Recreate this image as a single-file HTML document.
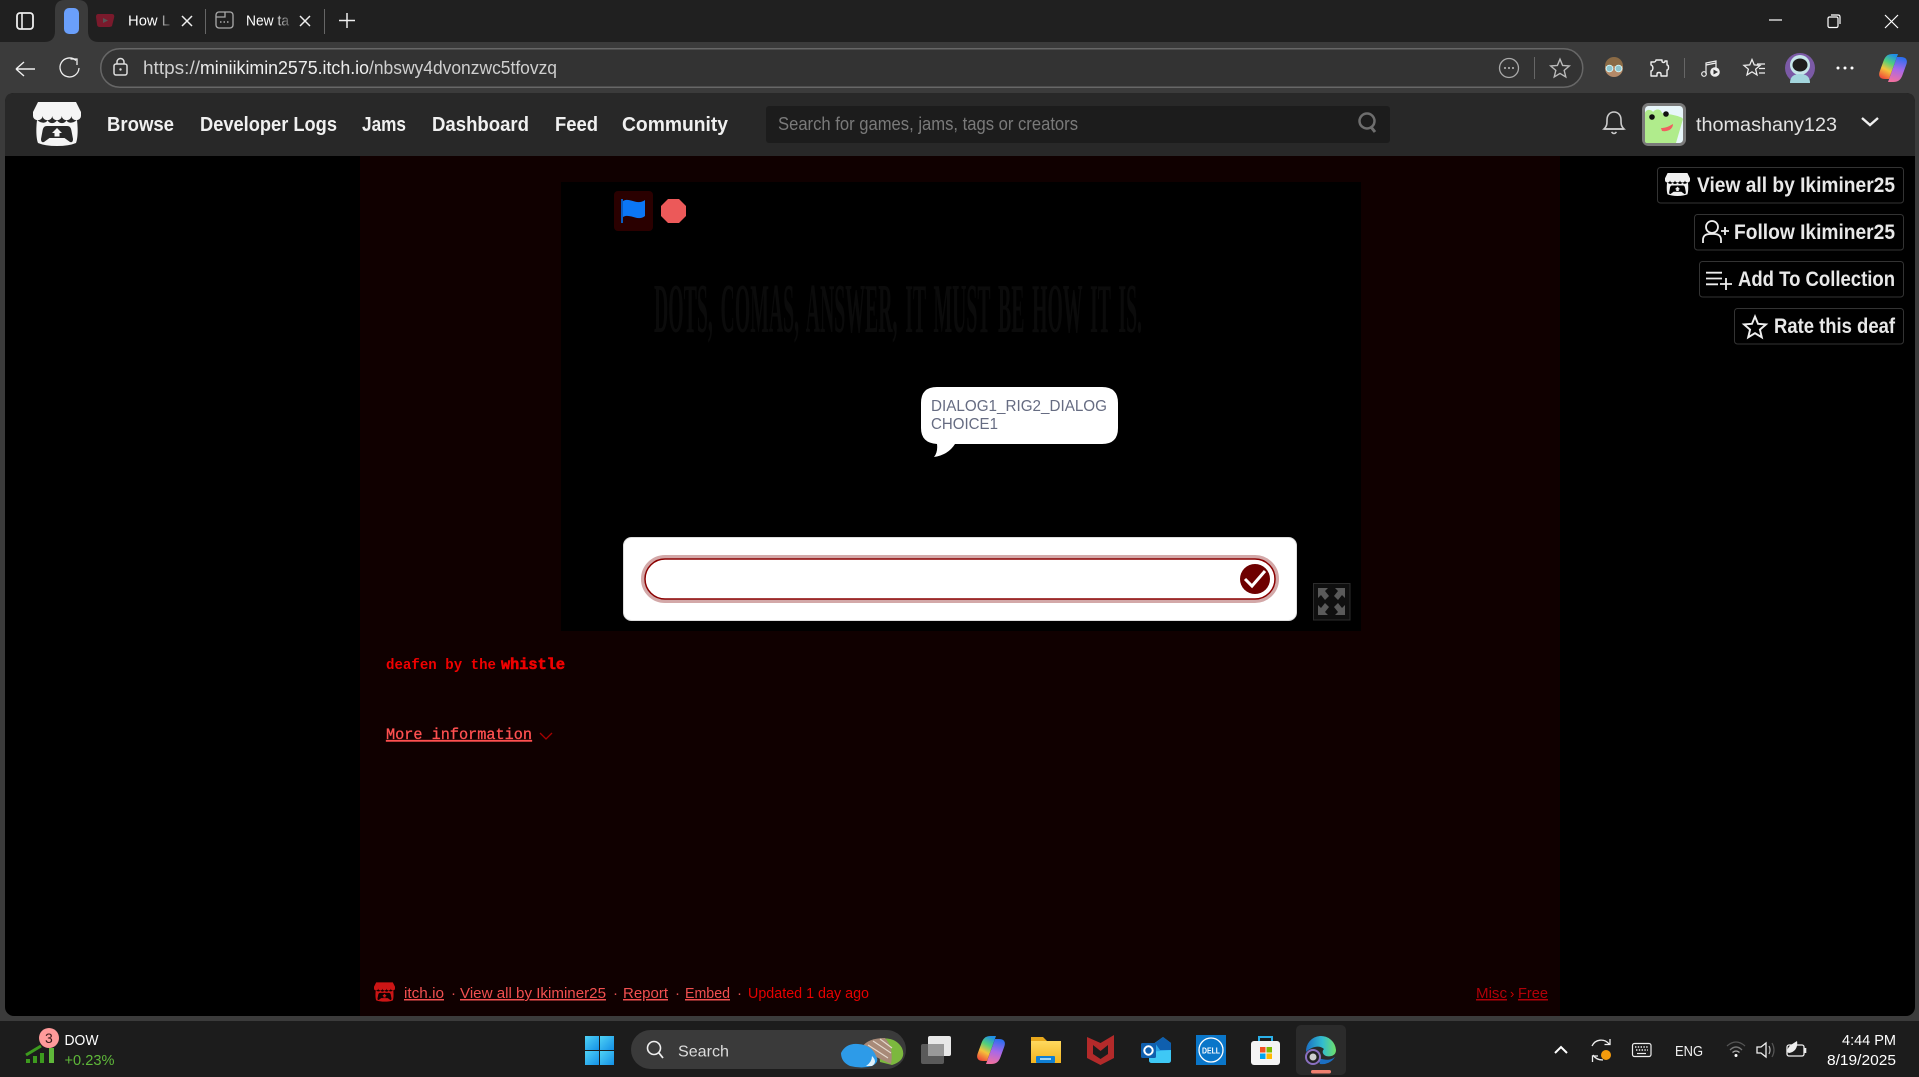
<!DOCTYPE html>
<html lang="en"><head><meta charset="utf-8"><title>How L</title>
<style>
html,body{margin:0;padding:0;width:1919px;height:1077px;overflow:hidden;background:#1c1c1c}
svg{display:block;position:absolute;left:0;top:0}
text{font-family:"Liberation Sans",sans-serif;white-space:pre}
.n{font-weight:700;font-size:20.5px;fill:#f0f0f0}
.b{font-weight:700;font-size:21px;fill:#e8e8e8}
.f{font-size:15px;fill:#f25050;text-decoration:underline}
.d{font-size:15px;fill:#e05050}
text.m{font-family:"Liberation Mono",monospace}
.t{fill:#fff;font-size:14.5px}
</style></head><body>
<svg width="1919" height="1077" viewBox="0 0 1919 1077" xmlns="http://www.w3.org/2000/svg">
<defs>
<linearGradient id="fa" x1="0" x2="1" y1="0" y2="0"><stop offset=".65" stop-color="#fff"/><stop offset="1" stop-color="#555"/></linearGradient>
<linearGradient id="co" x1=".7" x2=".3" y1="0" y2="1"><stop offset="0" stop-color="#1f8fe8"/><stop offset=".35" stop-color="#52d07a"/><stop offset=".65" stop-color="#f5c33b"/><stop offset="1" stop-color="#f0503a"/></linearGradient>
<linearGradient id="co2" x1=".6" x2=".4" y1="0" y2="1"><stop offset="0" stop-color="#2a6ff0"/><stop offset=".5" stop-color="#a868e8"/><stop offset="1" stop-color="#f070a0"/></linearGradient>
<linearGradient id="win" x1="0" x2="1" y1="0" y2="1"><stop offset="0" stop-color="#4fd2f5"/><stop offset="1" stop-color="#1490e6"/></linearGradient>
<linearGradient id="ed" x1="0" x2="1" y1=".5" y2=".5"><stop offset="0" stop-color="#1b6fc4"/><stop offset=".55" stop-color="#32bcd0"/><stop offset="1" stop-color="#6fe06a"/></linearGradient>
<linearGradient id="fo" x1="0" x2="0" y1="0" y2="1"><stop offset="0" stop-color="#ffd95e"/><stop offset="1" stop-color="#f3b41f"/></linearGradient>
<symbol id="itch" viewBox="0 0 48 44">
<path d="M5 0H43L48 10V14A4.8 4.2 0 0 1 38.4 14A4.8 4.2 0 0 1 28.8 14A4.8 4.2 0 0 1 19.2 14A4.8 4.2 0 0 1 9.6 14A4.8 4.2 0 0 1 0 14V10Z" fill="currentColor"/>
<path fill-rule="evenodd" fill="currentColor" d="M4 18C9 22 13 21 14.500 18.500C17 22 21 22 24 18.500C27 22 31 22 33.500 18.500C35 21 39 22 44 18C45 26 45 36 43 41Q36 44 24 44Q12 44 5 41C3 36 3 26 4 18ZM14 24C11 24 10 26 9.500 29L8 37Q8 41 11 40L16.500 36H31.500L37 40Q40 41 40 37L38.500 29C38 26 37 24 34 24Z"/>
<path d="M24 26L29 31H26.500V34.500H21.500V31H19Z" fill="currentColor"/>
</symbol>
<path id="star" d="M0 -10L2.65 -3.64L9.5 -3.1L4.28 1.39L5.9 8.1L0 4.5L-5.9 8.1L-4.28 1.39L-9.5 -3.1L-2.65 -3.64Z"/>
<path id="copA" d="M0 -14C-6 -14 -8 -11 -9.500 -7L-13.500 4C-15 9 -12 11 -8 11H-4L5 -14Z"/>
<path id="copB" d="M0 14C6 14 8 11 9.500 7L13.500 -4C15 -9 12 -11 8 -11H4L-5 14Z"/>
</defs>

<!-- browser chrome -->
<rect width="1919" height="1077" fill="#3b3b3b"/>
<rect width="1919" height="42" fill="#202020"/>
<path d="M44 42Q55 42 55 31V10Q55 0 65 0H78Q88 0 88 10V31Q88 42 99 42Z" fill="#3b3b3b"/>
<rect x="17" y="13" width="16" height="16" rx="3" fill="none" stroke="#eee" stroke-width="1.800"/><path d="M22 13V29" stroke="#eee" stroke-width="1.600" fill="none"/>
<rect x="64" y="8" width="15" height="26" rx="5" fill="#6a9ffb"/>
<path d="M98 14H112Q115 14 114 18L112 26Q111 27 108 27H100Q97 27 97 24L96 17Q96 14 98 14Z" fill="#7a1a2c"/><path d="M103 18L108 20.500L103 23Z" fill="#555"/>
<text x="128" y="25.500" font-size="15" fill="url(#fa)" textLength="42" lengthAdjust="spacingAndGlyphs">How L</text>
<path d="M182 16L192 26M192 16L182 26" stroke="#eee" stroke-width="1.500"/>
<rect x="205" y="9" width="1" height="25" fill="#666"/>
<rect x="216" y="12" width="17" height="16" rx="3" fill="none" stroke="#aaa" stroke-width="1.300"/><path d="M216 17H225V12" fill="none" stroke="#aaa" stroke-width="1.300"/><path d="M220 22H229" stroke="#aaa" stroke-width="1.500" stroke-dasharray="1.500 2"/>
<text x="246" y="25.500" font-size="15" fill="url(#fa)" textLength="43" lengthAdjust="spacingAndGlyphs">New ta</text>
<path d="M300 16L310 26M310 16L300 26" stroke="#eee" stroke-width="1.500"/>
<rect x="324" y="9" width="1" height="25" fill="#666"/>
<path d="M347 13V28M339 20.500H355" stroke="#eee" stroke-width="1.500"/>
<path d="M1769 20H1782" stroke="#fff" stroke-width="1.200"/>
<rect x="1828" y="17" width="10" height="10.500" rx="1.500" fill="none" stroke="#fff" stroke-width="1.200"/><path d="M1831 15H1838Q1840 15 1840 17V24" fill="none" stroke="#fff" stroke-width="1.200"/>
<path d="M1885 15L1898 28M1898 15L1885 28" stroke="#fff" stroke-width="1.200"/>

<path d="M16 69H35M16 69L24 62M16 69L24 76" stroke="#f0f0f0" stroke-width="1.400" fill="none"/>
<path d="M76 60.500A9.500 9.500 0 1 0 79 68" stroke="#eee" stroke-width="1.300" fill="none"/><path d="M70.500 59H77V65" stroke="#eee" stroke-width="1.300" fill="none"/>
<rect x="100.750" y="48.750" width="1482" height="38.500" rx="19" fill="#333" stroke="#676767" stroke-width="1.500"/>
<rect x="114" y="64" width="13" height="11" rx="2" fill="none" stroke="#ddd" stroke-width="1.500"/><path d="M117 64V62A3.500 3.500 0 0 1 124 62V64" fill="none" stroke="#ddd" stroke-width="1.500"/><circle cx="120.500" cy="69.500" r="1.200" fill="#ddd"/>
<text x="143" y="74" font-size="18" fill="#cfcfcf" textLength="57" lengthAdjust="spacingAndGlyphs">https://</text>
<text x="200" y="74" font-size="18" fill="#eeeeee" textLength="169" lengthAdjust="spacingAndGlyphs">miniikimin2575.itch.io</text>
<text x="369" y="74" font-size="18" fill="#cfcfcf" textLength="188" lengthAdjust="spacingAndGlyphs">/nbswy4dvonzwc5tfovzq</text>
<circle cx="1509" cy="68" r="9.500" fill="none" stroke="#aaa" stroke-width="1.300"/><path d="M1504 68H1506M1508 68H1510M1512 68H1514" stroke="#aaa" stroke-width="1.800"/>
<rect x="1534" y="57" width="1" height="22" fill="#666"/>
<use href="#star" transform="translate(1560 69) scale(.98)" fill="none" stroke="#bbb" stroke-width="1.400"/>
<circle cx="1614" cy="68" r="9" fill="#b58a68"/><path d="M1605 66A9 9 0 0 1 1623 66Z" fill="#8a6a45"/><circle cx="1609.500" cy="68.500" r="3.400" fill="#8fc4cc" stroke="#dff" stroke-width=".8"/><circle cx="1618.500" cy="68.500" r="3.400" fill="#8fc4cc" stroke="#dff" stroke-width=".8"/>
<path d="M1656 60H1662V61C1662 63 1665 63 1665 61H1667V65C1669 65 1669 70 1667 70V76H1661V74C1661 72 1657 72 1657 74V76H1651V71C1653 71 1654 66 1651 65V62H1654C1655 62 1656 61 1656 60Z" fill="none" stroke="#eee" stroke-width="1.400" stroke-linejoin="round"/>
<rect x="1684" y="58" width="1" height="20" fill="#666"/>
<path d="M1706 74V63L1716 61V70" fill="none" stroke="#eee" stroke-width="1.200"/><path d="M1706 65L1716 63" stroke="#eee" stroke-width="1.200"/><circle cx="1704" cy="74" r="2.300" fill="none" stroke="#eee" stroke-width="1.200"/><circle cx="1715" cy="72" r="4.800" fill="#eee"/><path d="M1713.500 69.500L1718 72L1713.500 74.500Z" fill="#333"/>
<use href="#star" transform="translate(1752 68) scale(.85)" fill="none" stroke="#eee" stroke-width="1.500"/><path d="M1757 64H1765M1759 68.500H1765M1759 73H1765" stroke="#eee" stroke-width="1.200"/>
<circle cx="1800" cy="68" r="15" fill="#7b5aa6"/><circle cx="1800" cy="65" r="10" fill="#c6e6ea"/><ellipse cx="1800" cy="65" rx="7.500" ry="6.500" fill="#1e1e1e"/><path d="M1790 83Q1790 74 1800 74Q1810 74 1810 83Z" fill="#a4d6de"/>
<circle cx="1838" cy="68" r="1.500" fill="#fff"/><circle cx="1845" cy="68" r="1.500" fill="#fff"/><circle cx="1852" cy="68" r="1.500" fill="#fff"/>
<use href="#copA" transform="translate(1893 68)" fill="url(#co)"/><use href="#copB" transform="translate(1893 68)" fill="url(#co2)"/>

<!-- page -->
<rect x="5" y="93" width="1910" height="923" rx="9" fill="#000"/>
<path d="M5 156V102Q5 93 14 93H1906Q1915 93 1915 102V156Z" fill="#282828"/>
<rect x="360" y="156" width="1200" height="860" fill="#100000"/>
<use href="#itch" x="33" y="102" width="48" height="44" color="#f5f5f5" style="color:#f5f5f5"/>
<text class="n" x="107" y="131" textLength="67" lengthAdjust="spacingAndGlyphs">Browse</text>
<text class="n" x="200" y="131" textLength="137" lengthAdjust="spacingAndGlyphs">Developer Logs</text>
<text class="n" x="362" y="131" textLength="44" lengthAdjust="spacingAndGlyphs">Jams</text>
<text class="n" x="432" y="131" textLength="97" lengthAdjust="spacingAndGlyphs">Dashboard</text>
<text class="n" x="555" y="131" textLength="43" lengthAdjust="spacingAndGlyphs">Feed</text>
<text class="n" x="622" y="131" textLength="106" lengthAdjust="spacingAndGlyphs">Community</text>
<rect x="766" y="106" width="624" height="37" rx="3" fill="#1c1c1c"/>
<text x="778" y="130" font-size="18" fill="#7a7a7a" textLength="300" lengthAdjust="spacingAndGlyphs">Search for games, jams, tags or creators</text>
<circle cx="1367" cy="121" r="7.500" fill="none" stroke="#6e6e6e" stroke-width="2.500"/><path d="M1371 127L1375 132" stroke="#6e6e6e" stroke-width="3"/>
<path d="M1604 129C1607 126 1607 124 1607 120C1607 115 1610 112 1614 112C1618 112 1621 115 1621 120C1621 124 1621 126 1624 129Z" fill="none" stroke="#ccc" stroke-width="1.600"/><path d="M1604 129H1624" stroke="#ccc" stroke-width="1.800"/><path d="M1611.500 132Q1614 135 1616.500 132" stroke="#ccc" stroke-width="1.500" fill="none"/>
<rect x="1643.500" y="104.500" width="41" height="40" rx="5" fill="#e8f6fa" stroke="#7a7a7a" stroke-width="3"/>
<path d="M1645 113C1646 109 1651 109 1653 112C1656 108 1661 109 1662 113C1668 114 1682 116 1683 119L1676 143H1647Q1645 143 1645 141Z" fill="#b0ec8c"/><circle cx="1652" cy="117" r="2.800" fill="#111"/><circle cx="1666" cy="114" r="2.800" fill="#111"/><path d="M1661 128C1665 128 1668 127 1673 124C1673 129 1668 132 1662 131Z" fill="#f06060"/>
<text x="1696" y="131" font-size="19" fill="#e2e2e2" textLength="141" lengthAdjust="spacingAndGlyphs">thomashany123</text>
<path d="M1862 118L1870 125L1878 118" fill="none" stroke="#f0f0f0" stroke-width="2.400"/>

<!-- side buttons -->
<g fill="none" stroke="#333"><rect x="1657.500" y="167.500" width="246" height="35.500" rx="3"/><rect x="1694.500" y="214.500" width="209" height="35.500" rx="3"/><rect x="1699.500" y="261.500" width="204" height="35.500" rx="3"/><rect x="1734.500" y="308.500" width="169" height="35.500" rx="3"/></g>
<use href="#itch" x="1665" y="173" width="25" height="23" style="color:#f0f0f0"/>
<text class="b" x="1697" y="192" textLength="198" lengthAdjust="spacingAndGlyphs">View all by Ikiminer25</text>
<circle cx="1712" cy="227" r="6" fill="none" stroke="#eee" stroke-width="1.800"/><path d="M1703 243V240Q1703 234 1710 234H1714Q1721 234 1721 240V243" fill="none" stroke="#eee" stroke-width="1.800"/><path d="M1725 227V235M1721 231H1729" stroke="#eee" stroke-width="1.800"/>
<text class="b" x="1734" y="239" textLength="161" lengthAdjust="spacingAndGlyphs">Follow Ikiminer25</text>
<path d="M1706 272.700H1722M1706 278.500H1722M1706 284.300H1718M1726 278V290M1720 284H1732" stroke="#eee" stroke-width="1.800"/>
<text class="b" x="1738" y="286" textLength="157" lengthAdjust="spacingAndGlyphs">Add To Collection</text>
<use href="#star" transform="translate(1755 328) scale(1.150)" fill="none" stroke="#eee" stroke-width="1.700"/>
<text class="b" x="1774" y="333" textLength="121" lengthAdjust="spacingAndGlyphs">Rate this deaf</text>

<!-- game -->
<rect x="561" y="182" width="800" height="449" fill="#000"/>
<rect x="614" y="191" width="39" height="40" rx="4" fill="#2a0000"/>
<path d="M622 199V223" stroke="#0a5cc0" stroke-width="2"/><path d="M623 201C630 197 637 206 645 200V216C638 222 630 213 623 217Z" fill="#0b76f5"/>
<path d="M668 199H679L686 206V216L679 223H668L661 216V206Z" fill="#ec5959"/>
<text x="654" y="332" font-size="70" font-weight="700" fill="#0b0b0b" style="font-family:'Liberation Serif',serif" textLength="488" lengthAdjust="spacingAndGlyphs" word-spacing="10">DOTS, COMAS, ANSWER, IT MUST BE HOW IT IS.</text>
<path d="M937 387H1102Q1118 387 1118 403V428Q1118 444 1102 444H955Q948 455 934 457Q938 452 937 444Q921 443 921 428V403Q921 387 937 387Z" fill="#fff"/>
<text x="931" y="411" font-size="15.500" fill="#666c82" textLength="176" lengthAdjust="spacingAndGlyphs">DIALOG1_RIG2_DIALOG</text>
<text x="931" y="429" font-size="15.500" fill="#666c82" textLength="67" lengthAdjust="spacingAndGlyphs">CHOICE1</text>
<rect x="623.500" y="537.500" width="673" height="83" rx="8" fill="#fff" stroke="#ddd"/>
<rect x="643" y="557" width="634" height="44" rx="22" fill="#fff" stroke="#d3a8a8" stroke-width="4"/>
<rect x="645" y="559" width="630" height="40" rx="20" fill="#fff" stroke="#8a0000" stroke-width="1.500"/>
<circle cx="1255" cy="579" r="15" fill="#6e0000"/><path d="M1245 579L1252 586L1265 571" fill="none" stroke="#fff" stroke-width="3"/>
<rect x="1313.500" y="583.500" width="36.500" height="36.500" fill="#0f0f0f" stroke="#2c2c2c"/>
<g fill="#5a5a5a"><path d="M1318 588H1328L1325 591L1329 596L1325 600L1321 595L1318 598Z"/><path d="M1345 588H1335L1338 591L1334 596L1338 600L1342 595L1345 598Z"/><path d="M1318 615H1328L1325 612L1329 607L1325 603L1321 608L1318 605Z"/><path d="M1345 615H1335L1338 612L1334 607L1338 603L1342 608L1345 605Z"/></g>

<!-- description -->
<text class="m" x="386" y="669" font-size="14.500" font-weight="700" fill="#f00000" textLength="110" lengthAdjust="spacingAndGlyphs">deafen by the</text>
<text class="m" x="501" y="669" font-size="15.500" font-weight="700" fill="#f00000" stroke="#f00000" stroke-width=".6" textLength="64" lengthAdjust="spacingAndGlyphs">whistle</text>
<text class="m" x="386" y="739" font-size="15.500" fill="#ff5050" stroke="#ff5050" stroke-width=".3" text-decoration="underline" textLength="146" lengthAdjust="spacingAndGlyphs">More information</text>
<path d="M540 733L546 739L552 733" fill="none" stroke="#a80000" stroke-width="1.300"/>

<!-- footer -->
<use href="#itch" x="374" y="982" width="21" height="20" style="color:#cc1515"/>
<text class="f" x="404" y="998" textLength="40" lengthAdjust="spacingAndGlyphs">itch.io</text>
<text class="d" x="451" y="998">·</text>
<text class="f" x="460" y="998" textLength="146" lengthAdjust="spacingAndGlyphs">View all by Ikiminer25</text>
<text class="d" x="613" y="998">·</text>
<text class="f" x="623" y="998" textLength="45" lengthAdjust="spacingAndGlyphs">Report</text>
<text class="d" x="675" y="998">·</text>
<text class="f" x="685" y="998" textLength="45" lengthAdjust="spacingAndGlyphs">Embed</text>
<text class="d" x="737" y="998">·</text>
<text x="748" y="998" font-size="15" fill="#e60000" textLength="121" lengthAdjust="spacingAndGlyphs">Updated 1 day ago</text>
<text x="1476" y="998" font-size="15" fill="#b00008" text-decoration="underline" textLength="31" lengthAdjust="spacingAndGlyphs">Misc</text>
<text x="1510" y="998" font-size="13" fill="#d00000">›</text>
<text x="1518" y="998" font-size="15" fill="#b00008" text-decoration="underline" textLength="30" lengthAdjust="spacingAndGlyphs">Free</text>

<!-- taskbar -->
<rect y="1021" width="1919" height="56" fill="#1c1c1c"/>
<g fill="#3d9a1e"><rect x="26" y="1059" width="4" height="4"/><rect x="33" y="1056" width="4" height="7"/><rect x="40" y="1053" width="4" height="10"/><rect x="49" y="1048" width="5" height="15" fill="#5fb83a"/><path d="M26 1055L41 1046" stroke="#3d9a1e" stroke-width="3"/></g>
<circle cx="49" cy="1038" r="10" fill="#ff9a9a"/>
<text x="45" y="1043" font-size="14" fill="#3a1a1a">3</text>
<text x="64.500" y="1045" font-size="14.500" fill="#fff" textLength="34" lengthAdjust="spacingAndGlyphs">DOW</text>
<text x="64.500" y="1065" font-size="14.500" fill="#5fb83a" textLength="50" lengthAdjust="spacingAndGlyphs">+0.23%</text>
<g fill="url(#win)"><rect x="585" y="1036" width="14" height="14"/><rect x="600" y="1036" width="14" height="14"/><rect x="585" y="1051" width="14" height="14"/><rect x="600" y="1051" width="14" height="14"/></g>
<rect x="631" y="1030" width="275" height="39" rx="19.500" fill="#3a3a3a"/>
<circle cx="654" cy="1048" r="6.500" fill="none" stroke="#eee" stroke-width="1.600"/><path d="M659 1053L663 1058" stroke="#eee" stroke-width="1.800"/>
<text x="678" y="1056.500" font-size="16" fill="#dcdcdc" textLength="51" lengthAdjust="spacingAndGlyphs">Search</text>
<path d="M878 1039Q895 1036 902 1048Q907 1060 892 1065L880 1062Z" fill="#7cb83e"/>
<path d="M862 1047Q868 1038 885 1038Q894 1048 891 1064Q882 1060 874 1056Z" fill="#a88a78"/>
<path d="M868 1045L888 1058M873 1041L891 1053M880 1039L892 1048" stroke="#e4d8cc" stroke-width="1.200" fill="none"/>
<path d="M841 1053Q846 1043 858 1044Q872 1045 876 1056Q880 1062 872 1066Q862 1069 850 1066Q841 1062 841 1053Z" fill="#2d9be8"/>
<path d="M872 1056Q878 1062 872 1066L866 1066Q872 1062 872 1056Z" fill="#dff1fb"/>
<rect x="921" y="1044" width="23" height="20" rx="2" fill="#5a5a5a"/><rect x="928" y="1036" width="23" height="20" rx="2" fill="#e8e8e8"/><rect x="928" y="1044" width="16" height="12" fill="#999"/>
<use href="#copA" transform="translate(991 1050)" fill="url(#co)"/><use href="#copB" transform="translate(991 1050)" fill="url(#co2)"/>
<path d="M1031 1037H1043L1047 1041H1061V1063H1031Z" fill="#e8a81c"/><rect x="1031" y="1041" width="30" height="22" fill="url(#fo)"/><rect x="1036" y="1056" width="19" height="7" rx="1" fill="#0f7fd4"/><rect x="1040" y="1058" width="11" height="2" fill="#9fd4f5"/>
<path d="M1087 1037L1100.500 1043L1114 1035V1058L1100.500 1065L1087 1058Z" fill="#b32a2a"/><path d="M1093 1045L1100.500 1051L1108 1045V1054L1100.500 1059L1093 1054Z" fill="#1c1c1c"/>
<path d="M1149 1047L1163 1037L1171 1043V1060Q1171 1063 1168 1063H1152Q1149 1063 1149 1060Z" fill="#2aa5e8"/><path d="M1155 1043L1163 1037L1171 1043V1050L1160 1050Z" fill="#0f5fae"/><path d="M1149 1052L1171 1050V1060Q1171 1063 1168 1063H1152Q1149 1063 1149 1060Z" fill="#3ec8f5"/><rect x="1141" y="1043" width="15" height="15" rx="1.500" fill="#0f5fae"/><circle cx="1148.500" cy="1050.500" r="4.200" fill="none" stroke="#fff" stroke-width="2"/>
<rect x="1196" y="1035" width="30" height="30" fill="#0a76c9"/><circle cx="1211" cy="1050" r="12" fill="none" stroke="#fff" stroke-width="1.300"/><text x="1202" y="1053.500" font-size="8.500" font-weight="700" fill="#fff" textLength="18" lengthAdjust="spacingAndGlyphs">DELL</text>
<path d="M1259 1042V1037H1272V1042" fill="none" stroke="#2ab0e8" stroke-width="2"/><rect x="1251" y="1041" width="29" height="24" rx="3" fill="#f4f4f4"/>
<rect x="1260" y="1047" width="5.500" height="5.500" fill="#f25022"/><rect x="1266.500" y="1047" width="5.500" height="5.500" fill="#7fba00"/><rect x="1260" y="1053.500" width="5.500" height="5.500" fill="#00a4ef"/><rect x="1266.500" y="1053.500" width="5.500" height="5.500" fill="#ffb900"/>
<rect x="1296" y="1025" width="50" height="50" rx="5" fill="#2b2b2b"/>
<path d="M1306 1052A15 15 0 0 1 1336 1050C1336 1056 1330 1057 1326 1056C1322 1054 1322 1051 1324 1049C1320 1045 1312 1046 1306 1052Z" fill="url(#ed)"/><path d="M1320 1064A15 15 0 0 0 1335 1057C1330 1061 1325 1060 1318 1058Z" fill="#1b6fc4"/>
<circle cx="1313" cy="1057" r="7" fill="#222" stroke="#8a70c0" stroke-width="2"/><circle cx="1313" cy="1057" r="3.500" fill="#cfcfcf"/>
<rect x="1311" y="1070" width="20" height="3.500" rx="1.700" fill="#ef8070"/>

<path d="M1555 1053L1561 1047L1567 1053" fill="none" stroke="#fff" stroke-width="2"/>
<path d="M1592 1046A10 10 0 0 1 1609 1044M1610 1039V1044.500H1604.500M1593 1055Q1596 1060 1603 1060M1592.500 1062V1056H1598" fill="none" stroke="#eee" stroke-width="1.300"/><circle cx="1606" cy="1055" r="5" fill="#f59b0c"/>
<rect x="1632.500" y="1043.500" width="18.500" height="13" rx="2" fill="none" stroke="#eee" stroke-width="1.200"/><path d="M1635 1047H1649M1636 1050H1648" stroke="#eee" stroke-width="1.400" stroke-dasharray="1.400 1.400"/><path d="M1637 1053.500H1646" stroke="#eee" stroke-width="1.200"/>
<text x="1675" y="1056" font-size="14.500" fill="#f0f0f0" textLength="28" lengthAdjust="spacingAndGlyphs">ENG</text>
<path d="M1727 1046Q1736 1038 1745 1046" fill="none" stroke="#555" stroke-width="1.300"/><path d="M1730 1050Q1736 1044 1742 1050" fill="none" stroke="#777" stroke-width="1.300"/><path d="M1732.500 1052.500Q1736 1049.500 1739.500 1052.500" fill="none" stroke="#aaa" stroke-width="1.300"/><circle cx="1736" cy="1055.500" r="1.500" fill="#fff"/>
<path d="M1757 1047H1761L1766 1043V1057L1761 1053H1757Z" fill="none" stroke="#eee" stroke-width="1.300"/><path d="M1769 1046Q1771 1050 1769 1054" fill="none" stroke="#bbb" stroke-width="1.200"/><path d="M1772 1043Q1776 1050 1772 1057" fill="none" stroke="#555" stroke-width="1.200"/>
<rect x="1787" y="1045" width="17" height="11" rx="2" fill="none" stroke="#eee" stroke-width="1.300"/><rect x="1804.500" y="1048" width="1.800" height="5" fill="#eee"/><path d="M1787 1052C1788 1045 1793 1044 1797 1041C1798 1046 1796 1052 1789 1053Z" fill="#eee"/>
<text class="t" x="1842" y="1045" textLength="54" lengthAdjust="spacingAndGlyphs">4:44 PM</text>
<text class="t" x="1827" y="1065" textLength="69" lengthAdjust="spacingAndGlyphs">8/19/2025</text>
</svg>
</body></html>
